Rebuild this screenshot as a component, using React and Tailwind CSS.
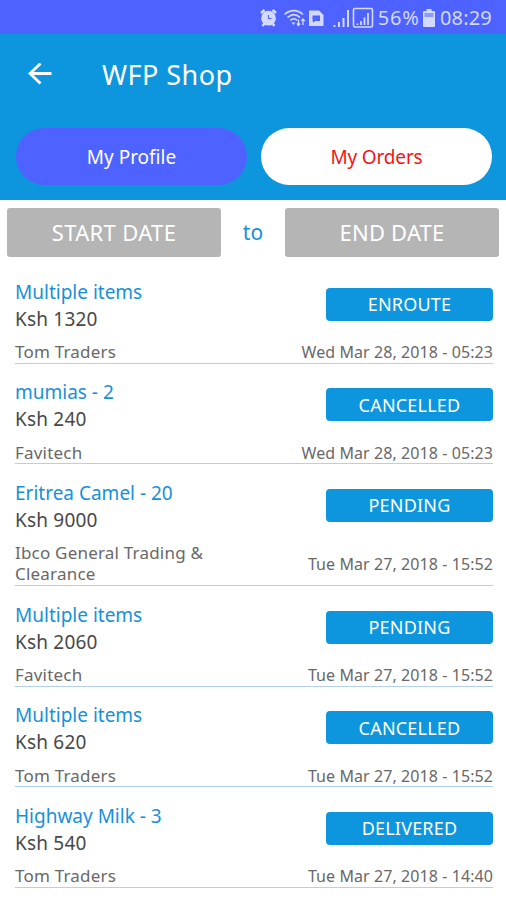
import React from "react";

const orders = [
  { item: "Multiple items", price: "Ksh 1320", vendor: "Tom Traders", date: "Wed Mar 28, 2018 - 05:23", status: "ENROUTE" },
  { item: "mumias - 2", price: "Ksh 240", vendor: "Favitech", date: "Wed Mar 28, 2018 - 05:23", status: "CANCELLED" },
  { item: "Eritrea Camel - 20", price: "Ksh 9000", vendor: "Ibco General Trading & Clearance", date: "Tue Mar 27, 2018 - 15:52", status: "PENDING" },
  { item: "Multiple items", price: "Ksh 2060", vendor: "Favitech", date: "Tue Mar 27, 2018 - 15:52", status: "PENDING" },
  { item: "Multiple items", price: "Ksh 620", vendor: "Tom Traders", date: "Tue Mar 27, 2018 - 15:52", status: "CANCELLED" },
  { item: "Highway Milk - 3", price: "Ksh 540", vendor: "Tom Traders", date: "Tue Mar 27, 2018 - 14:40", status: "DELIVERED" },
];

// Alarm, wifi, SIM and the two signal meters
const StatusIcons = () => (
  <svg width="115" height="22" viewBox="257 7 115 22" fill="none" stroke="#d3d9ff">
    <circle cx="266.5" cy="18.2" r="7.4" fill="#d3d9ff" stroke="none" />
    <path d="M259 13l3.5-3M274 13l-3.500-3M260.500 26l2-2.500M272.500 26l-2-2.500" strokeWidth="2.600" />
    <path d="M266.500 15v3.500h3" stroke="#4d62ff" strokeWidth="1.100" />
    <path d="M282.500 14.500c5.500-5.300 13-5.300 18.500 0M285.500 17.500c4-3.700 8.700-3.700 12.500 0M288.300 20.400c2.200-1.900 4.800-1.900 7 0" strokeWidth="1.700" />
    <path d="M289.500 22.500h4l-2 2.500z" fill="#d3d9ff" stroke="none" />
    <path d="M296.500 19.500v6M294.800 23.500l1.700 2 1.700-2M301 25v-6M299.300 21l1.700-2 1.700 2" strokeWidth="1.300" />
    <path d="M307 10.500h10l4.500 4.500v11h-14.500z" fill="#d3d9ff" stroke="none" />
    <path d="M310.500 15.500h7.500v5.500h-5l-2 2v-2h-.5z" fill="#4d62ff" stroke="none" />
    <path d="M332.500 27v-2M337 27v-5M341.500 27v-9M346 27v-17" strokeWidth="2" />
    <rect x="351.500" y="8.500" width="19" height="18.500" rx="1.500" strokeWidth="1.600" />
    <path d="M355.500 25v-1.500M359 25v-4M362.500 25v-7.500M366 25v-12" strokeWidth="1.800" />
  </svg>
);

const Battery = () => (
  <svg width="12" height="18" viewBox="0 0 12 18">
    <path d="M3.500 0h5v2h2.500a1 1 0 0 1 1 1v14a1 1 0 0 1-1 1h-10a1 1 0 0 1-1-1v-14a1 1 0 0 1 1-1h2.500z" fill="#d3d9ff" />
    <path d="M1.500 4h9v4h-9z" fill="#8b99ff" />
  </svg>
);

const OrderRow = ({ order }) => (
  <li className="border-b border-[#b5d0ee] pt-[15.500px] pb-[0.300px]">
    <div className="flex justify-between">
      <div className="text-[19px] leading-[27px]">
        <p className="text-[#1790d8]">{order.item}</p>
        <p className="tracking-[0.200px] text-[#484848]">{order.price}</p>
      </div>
      <span className="mt-[9px] flex h-[33px] w-[167px] items-center justify-center rounded-[4px] bg-[#0d96dd] pt-px text-[18px] tracking-[0.200px] text-white">
        {order.status}
      </span>
    </div>
    <div className="mt-[8.500px] flex items-center justify-between text-[#686868]">
      <p className="w-[220px] text-[17px] leading-[21.300px] tracking-[0.200px]">{order.vendor}</p>
      <p className="pt-px text-[16px] leading-[20px] tracking-[0.080px] whitespace-nowrap">{order.date}</p>
    </div>
  </li>
);

const App = () => {
  return (
    <div className="h-[900px] w-[506px] overflow-hidden bg-white font-['Noto_Sans',sans-serif]">
      <div className="flex h-[34px] items-center justify-end bg-[#4d62ff] pt-[2px] pr-[14px] text-[20px] text-[#d3d9ff]">
        <StatusIcons />
        <span className="ml-[4px] tracking-[0.900px]">56%</span>
        <span className="mr-[5px] ml-[3px]">
          <Battery />
        </span>
        <span className="tracking-[0.200px]">08:29</span>
      </div>

      <header className="h-[165.500px] bg-[#0d96dd]">
        <div className="flex h-[93.500px] items-center pb-[11px] pl-[28px] text-white">
          <svg width="24" height="24" viewBox="0 0 24 24" fill="none" stroke="white" strokeWidth="2.800">
            <path d="M23.500 10.500h-21M12.500 0.500l-10.500 10 10.500 10" />
          </svg>
          <h1 className="ml-[50px] text-[27px] tracking-[0.450px]">WFP Shop</h1>
        </div>
        <div className="flex gap-[14px] pl-4 text-[19px]">
          <button className="h-[57px] w-[231px] rounded-full bg-[#4d62ff] pt-[2px] text-white">My Profile</button>
          <button className="h-[57px] w-[231px] rounded-full bg-white pt-[2px] tracking-[-0.150px] text-[#f31414]">My Orders</button>
        </div>
      </header>

      <div className="flex items-center px-[7px] pt-[8px] text-[22px]">
        <button className="h-[49px] w-[214px] rounded-[3px] bg-[#b5b5b5] tracking-[0.350px] text-white">START DATE</button>
        <span className="grow pt-[2px] text-center text-[21px] text-[#1790d8]">to</span>
        <button className="h-[49px] w-[214px] rounded-[3px] bg-[#b5b5b5] tracking-[0.200px] text-white">END DATE</button>
      </div>

      <ul className="mr-[13px] ml-[15px] pt-[6.500px]">
        {orders.map((order, index) => (
          <OrderRow key={index} order={order} />
        ))}
      </ul>
    </div>
  );
};

export default App;
